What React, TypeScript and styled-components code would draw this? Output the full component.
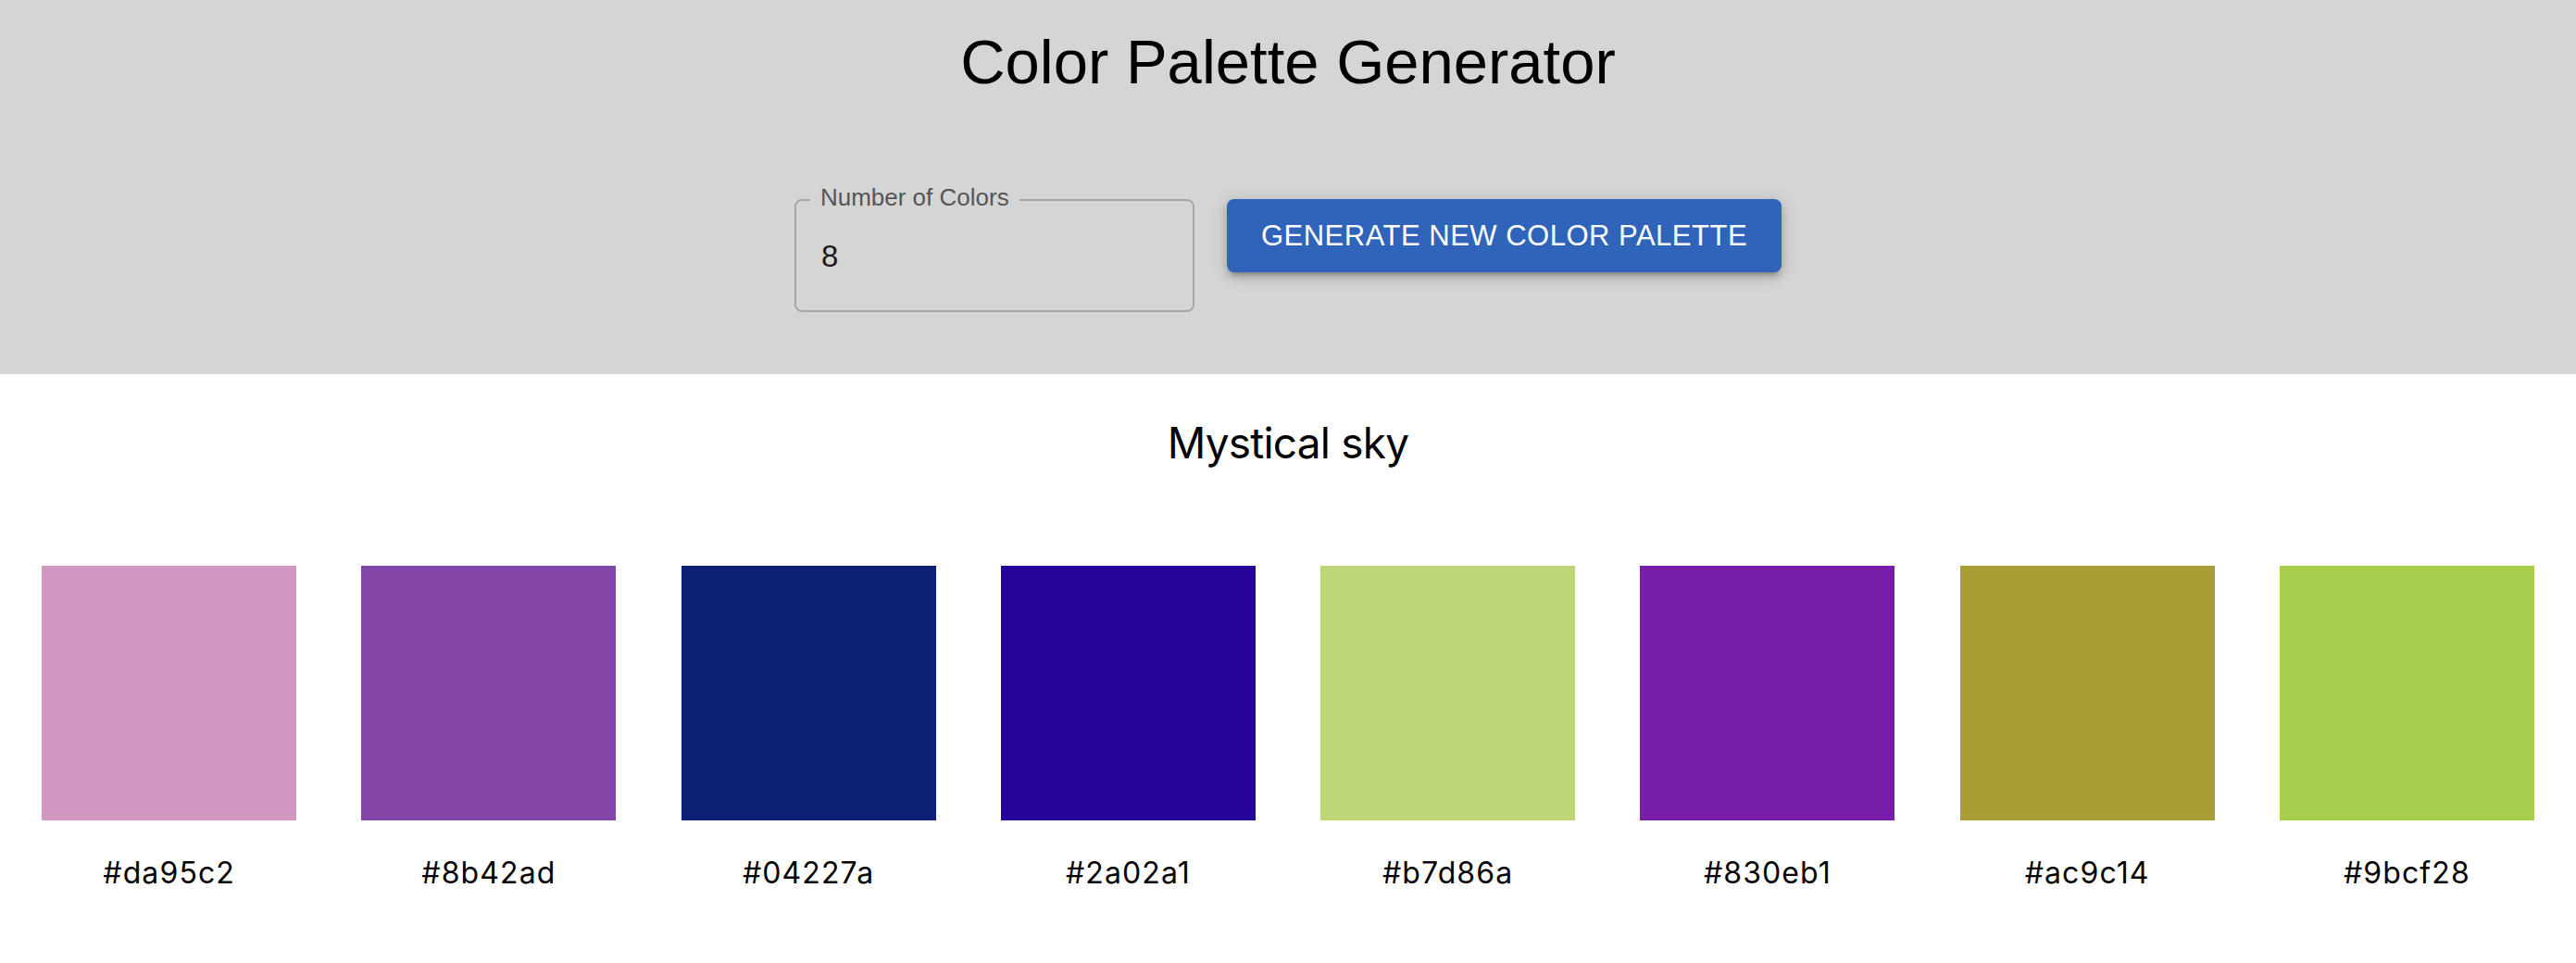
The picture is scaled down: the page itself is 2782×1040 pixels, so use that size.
import styled, { createGlobalStyle } from "styled-components";

const GlobalStyle = createGlobalStyle`
  body {
    margin: 0;
    background: #ffffff;
    font-family: "Liberation Sans", Arial, sans-serif;
  }
`;

const Header = styled.header`
  background: #d5d5d5;
  padding: 27px 0 67px;
  display: flex;
  flex-direction: column;
  align-items: center;
`;

const Title = styled.h1`
  margin: 0;
  font-family: "Liberation Sans", Arial, sans-serif;
  font-weight: 400;
  font-size: 67px;
  line-height: 80px;
  color: #000;
`;

const Controls = styled.div`
  margin-top: 108px;
  display: flex;
  align-items: flex-start;
  gap: 35px;
`;

const Field = styled.div`
  position: relative;
  box-sizing: border-box;
  width: 432px;
  height: 122px;
  padding: 40px 27px 0;
  border: 2px solid #a6a6a6;
  border-radius: 8px;
`;

const FieldLabel = styled.label`
  position: absolute;
  top: -17px;
  left: 15px;
  padding: 0 11px;
  background: #d5d5d5;
  font-family: "Liberation Sans", Arial, sans-serif;
  font-size: 26px;
  line-height: 26px;
  color: #555555;
  white-space: nowrap;
`;

const FieldInput = styled.input`
  display: block;
  width: 100%;
  height: 40px;
  padding: 0;
  margin: 0;
  border: none;
  outline: none;
  background: transparent;
  font-family: "Liberation Sans", Arial, sans-serif;
  font-size: 33px;
  line-height: 40px;
  color: #1a1a1a;
`;

const GenerateButton = styled.button`
  height: 79px;
  padding: 0 37px;
  display: flex;
  align-items: center;
  justify-content: center;
  border: none;
  border-radius: 8px;
  background: #3064ba;
  color: #ffffff;
  font-family: "Liberation Sans", Arial, sans-serif;
  font-size: 31px;
  font-weight: 400;
  letter-spacing: 0.5px;
  text-transform: uppercase;
  cursor: pointer;
  box-shadow: 0 6px 4px -4px rgba(0, 0, 0, 0.22), 0 5px 10px 0 rgba(0, 0, 0, 0.18),
    0 3px 20px 0 rgba(0, 0, 0, 0.14);
`;

const PaletteSection = styled.section`
  padding-top: 46px;
  display: flex;
  flex-direction: column;
  align-items: center;
`;

const PaletteName = styled.h2`
  margin: 0;
  font-family: Inter, "Noto Sans", sans-serif;
  font-weight: 400;
  font-size: 46px;
  line-height: 56px;
  letter-spacing: -0.8px;
  color: #000;
`;

const SwatchGrid = styled.div`
  margin-top: 105px;
  box-sizing: border-box;
  width: 100%;
  padding: 0 10px;
  display: grid;
  grid-template-columns: repeat(8, 1fr);
  justify-items: center;
`;

const SwatchItem = styled.div`
  display: flex;
  flex-direction: column;
  align-items: center;
`;

const Swatch = styled.div<{ $color: string }>`
  width: 275px;
  height: 275px;
  background: ${(p) => p.$color};
`;

const HexLabel = styled.p`
  margin: 38px 0 0;
  font-family: Inter, "Noto Sans", sans-serif;
  font-size: 32px;
  line-height: 38px;
  letter-spacing: 1.1px;
  color: #000;
`;

// hex shown on screen, and the tone the swatch was captured with
const palette = [
  { hex: "#da95c2", shown: "#d098c0" },
  { hex: "#8b42ad", shown: "#8246a8" },
  { hex: "#04227a", shown: "#0c2175" },
  { hex: "#2a02a1", shown: "#26049a" },
  { hex: "#b7d86a", shown: "#bdd778" },
  { hex: "#830eb1", shown: "#781caa" },
  { hex: "#ac9c14", shown: "#a99d36" },
  { hex: "#9bcf28", shown: "#a6ce4b" },
];

export default function App() {
  return (
    <>
      <GlobalStyle />
      <Header>
        <Title>Color Palette Generator</Title>
        <Controls>
          <Field>
            <FieldLabel htmlFor="count">Number of Colors</FieldLabel>
            <FieldInput id="count" type="text" defaultValue="8" />
          </Field>
          <GenerateButton>Generate new color palette</GenerateButton>
        </Controls>
      </Header>
      <PaletteSection>
        <PaletteName>Mystical sky</PaletteName>
        <SwatchGrid>
          {palette.map((c) => (
            <SwatchItem key={c.hex}>
              <Swatch $color={c.shown} />
              <HexLabel>{c.hex}</HexLabel>
            </SwatchItem>
          ))}
        </SwatchGrid>
      </PaletteSection>
    </>
  );
}
